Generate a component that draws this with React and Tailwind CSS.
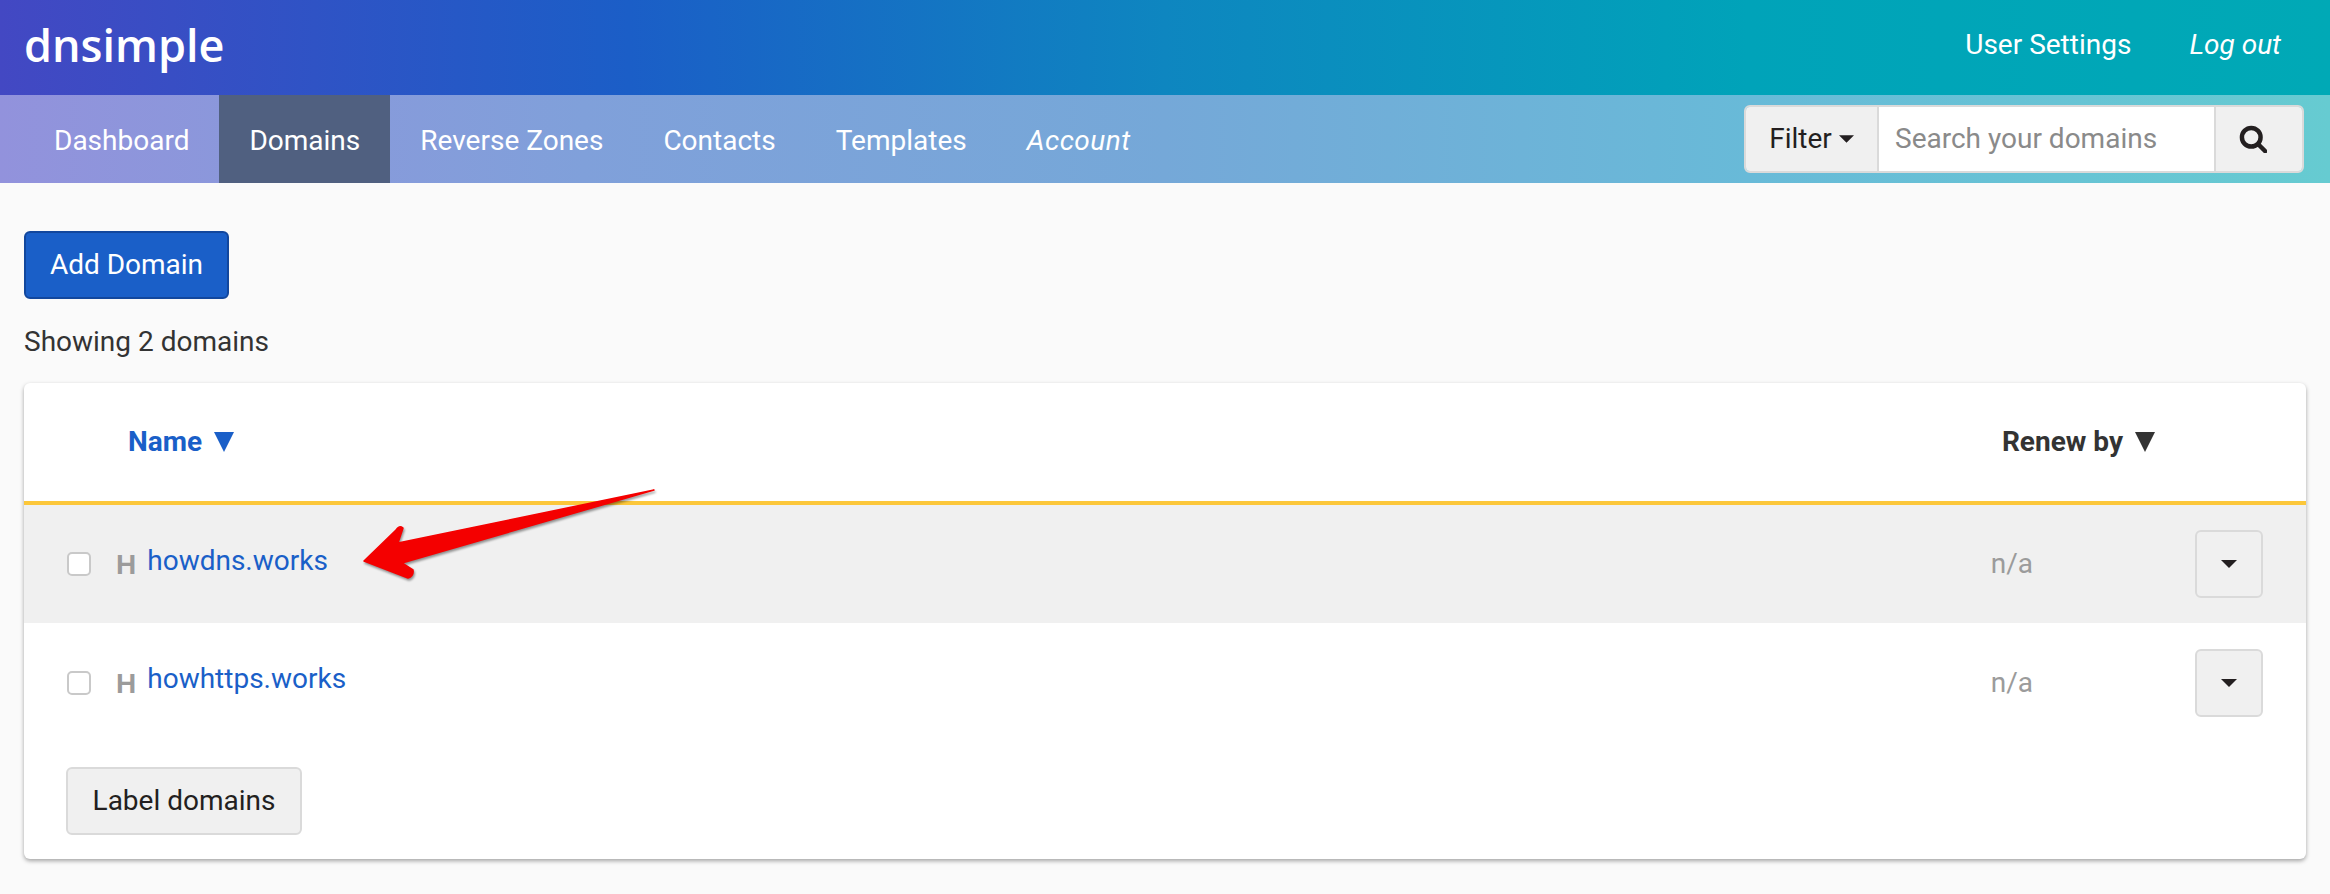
const navItems = ['Dashboard', 'Domains', 'Reverse Zones', 'Contacts', 'Templates'];

const domains = [
  { name: 'howdns.works', active: true },
  { name: 'howhttps.works', active: false },
];

const Caret = ({ className }) => (
  <svg viewBox="0 0 16 8" className={className}>
    <path d="M0 0h16L8 8z" fill="currentColor" />
  </svg>
);

const SearchIcon = () => (
  <svg viewBox="0 0 24 24" className="w-[28px] h-[28px] text-[#231f20]" fill="none" stroke="currentColor" strokeWidth="3.8">
    <circle cx="10.5" cy="10.5" r="8" />
    <path d="M16.5 16.5 22.5 22.5" strokeLinecap="round" />
  </svg>
);

const DomainRow = ({ domain }) => (
  <div className={`flex items-center pl-[43px] pr-[43px] ${domain.active ? 'h-[118px] bg-[#f0f0f0]' : 'h-[120px] bg-white'}`}>
    <span className="w-6 h-6 rounded-[5px] border-2 border-[#c9c9c9] bg-white" />
    <span className="ml-[25px] mt-[1px] text-[28px] font-bold text-[#9b9b9b] font-['Liberation_Sans',sans-serif]">H</span>
    <a className={`ml-[11px] text-[28px] text-[#1a5fc8] ${domain.active ? '-mt-[6px]' : '-mt-[8px]'}`}>{domain.name}</a>
    <span className="ml-auto text-[28px] text-[#9b9b9b] mr-[162px]">n/a</span>
    <button className="w-[68px] h-[68px] rounded-[6px] border-2 border-[#dadada] bg-[#f0f0f0] flex items-center justify-center">
      <Caret className="w-4 h-2 text-[#231f20]" />
    </button>
  </div>
);

export default function App() {
  return (
    <div className="min-h-[894px] bg-[#fafafa] font-['Roboto',sans-serif] text-[#333] relative">
      <header className="h-[95px] flex items-center justify-between pl-6 pr-[49px] bg-[linear-gradient(90deg,#4348c3_0%,#1b5ec7_27%,#0e86c0_50%,#00a3b9_75%,#00a9b6_100%)]">
        <span className="text-[45px] leading-none font-['Open_Sans',sans-serif] font-semibold text-white -mt-[7px]">dnsimple</span>
        <nav className="flex items-center gap-[58px] text-[28px] text-white -mt-[5px]">
          <a>User Settings</a>
          <a className="italic">Log out</a>
        </nav>
      </header>

      <div className="h-[88px] flex items-center justify-between pl-6 pr-[26px] bg-[linear-gradient(90deg,#9292dc_0%,#80a0da_25%,#75a8d8_50%,#68bad8_75%,#66cbd1_100%)]">
        <nav className="flex h-full text-[28px] text-white">
          {navItems.map((item) => (
            <a key={item} className={`flex items-center px-[30px] pt-[3px] ${item === 'Domains' ? 'bg-[#506080]' : ''}`}>{item}</a>
          ))}
          <a className="flex items-center px-[30px] pt-[3px] italic tracking-[0.5px]">Account</a>
        </nav>
        <div className="flex h-[68px] w-[560px] rounded-[6px] border-2 border-[#dadada] overflow-hidden text-[28px]">
          <button className="w-[133px] flex items-center justify-center gap-[7px] bg-[#f0f0f0] border-r-2 border-[#dadada] text-[#231f20]">
            Filter
            <Caret className="w-[15px] h-2" />
          </button>
          <input
            placeholder="Search your domains"
            className="flex-1 min-w-0 bg-white px-[16px] placeholder:text-[#8a8a8a] outline-none"
          />
          <button className="w-[88px] pr-[12px] flex items-center justify-center bg-[#f0f0f0] border-l-2 border-[#dadada]">
            <SearchIcon />
          </button>
        </div>
      </div>

      <main className="px-6 pt-[48px]">
        <button className="h-[68px] w-[205px] rounded-[6px] border-2 border-[#12479d] bg-[#1a5fc8] text-[28px] text-white">Add Domain</button>
        <p className="mt-[27px] text-[28px] leading-[32px]">Showing 2 domains</p>

        <div className="mt-[25px] bg-white rounded-[6px] shadow-[0_2px_4px_rgba(0,0,0,0.35)] overflow-hidden">
          <div className="h-[118px] flex items-center pl-[104px] pr-[150px] justify-between border-b-4 border-[#fcc73a] box-content">
            <span className="flex items-center gap-[11px] text-[28px] font-bold text-[#1a5fc8]">
              Name
              <svg viewBox="0 0 20 20" className="w-[22px] h-[20px]"><path d="M0 0h20L10 20z" fill="currentColor" /></svg>
            </span>
            <span className="flex items-center gap-[11px] text-[28px] font-bold text-[#333]">
              Renew by
              <svg viewBox="0 0 20 20" className="w-[22px] h-[20px]"><path d="M0 0h20L10 20z" fill="currentColor" /></svg>
            </span>
          </div>
          {domains.map((domain) => (
            <DomainRow key={domain.name} domain={domain} />
          ))}
          <div className="pl-[42px] pt-[24px] pb-[24px]">
            <button className="h-[68px] w-[236px] rounded-[6px] border-2 border-[#dadada] bg-[#f0f0f0] text-[28px] text-[#231f20]">Label domains</button>
          </div>
        </div>
      </main>

      {/* annotation arrow */}
      <svg className="absolute left-[355px] top-[482px] w-[310px] h-[100px] drop-shadow-[1px_2px_1px_rgba(0,0,0,0.4)]" viewBox="355 482 310 100">
        <path
          d="M654 490 L398 543 L403 528 Q399 525 396 530 L364 561 L408 578 Q414 576 413 570 L402 563 Z"
          fill="#f40000"
          stroke="#f40000"
          strokeWidth="1.5"
          strokeLinejoin="round"
        />
      </svg>
    </div>
  );
}
